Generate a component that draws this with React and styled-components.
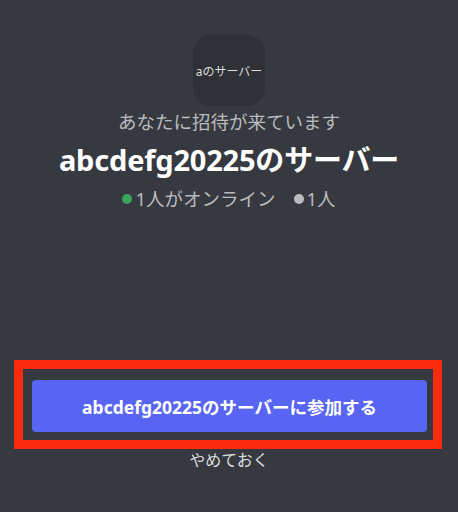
import React from 'react';
import styled, { createGlobalStyle } from 'styled-components';


//#region Styled Components
// 전역 스타일
const GlobalStyle = createGlobalStyle`
    html, body {
        margin: 0;
        padding: 0;
        background: #36393f;
    }
    body {
        font-family: "Noto Sans", "Noto Sans CJK JP", sans-serif;
        -webkit-font-smoothing: antialiased;
    }
`;

// 초대 화면
const InviteScreen = styled.div`
    width: 458px;
    height: 512px;
    box-sizing: border-box;
    padding-top: 35px;
    display: flex;
    flex-direction: column;
    align-items: center;
    background: #36393f;
    overflow: hidden;
`;

// 서버 아이콘
const ServerIcon = styled.div`
    width: 72px;
    height: 71px;
    border-radius: 18px;
    background: #2f3136;
    display: flex;
    align-items: center;
    justify-content: center;
    color: #dcddde;
    font-size: 12px;
    white-space: nowrap;
`;

// 초대 문구
const InviteLabel = styled.div`
    margin-top: 3px;
    color: #b9bbbe;
    font-size: 18.5px;
    line-height: 26px;
`;

// 서버 이름
const ServerName = styled.h1`
    margin: 7px 0 0;
    color: #ffffff;
    font-size: 29px;
    font-weight: 700;
    line-height: 36px;
    letter-spacing: -0.2px;
`;

// 멤버 수 영역
const MemberStats = styled.div`
    margin-top: 9px;
    display: flex;
    align-items: center;
    gap: 18px;
    color: #b9bbbe;
    font-size: 18.5px;
    line-height: 24px;
`;

const Stat = styled.span`
    display: flex;
    align-items: center;
    gap: 3px;
`;

const Dot = styled.i`
    width: 10px;
    height: 10px;
    border-radius: 50%;
    background: ${({ $online }) => ($online ? '#3ba55d' : '#b9bbbe')};
`;

const Spacer = styled.div`
    flex: 1;
`;

// 강조 표시 프레임
const Highlight = styled.div`
    align-self: stretch;
    margin: 0 16px 0 14px;
    border: 9px solid #fa2a0c;
    padding: 11px 6px 8px 9px;
    background: #36393f;
`;

// 참가 버튼
const JoinButton = styled.button`
    width: 100%;
    height: 52px;
    border: none;
    border-radius: 4px;
    background: #5865f2;
    color: #ffffff;
    font-family: inherit;
    font-size: 17.5px;
    font-weight: 700;
    cursor: pointer;
`;

// 취소 링크
const CancelLink = styled.button`
    margin: 1px 0 42px;
    border: none;
    background: none;
    padding: 0;
    color: #dcddde;
    font-family: inherit;
    font-size: 16px;
    line-height: 20px;
    cursor: pointer;
`;
//#endregion Styled Components


const App = () => {
    const serverName = 'abcdefg20225のサーバー';

    return (
        <>
            <GlobalStyle />
            <InviteScreen>
                <ServerIcon>aのサーバー</ServerIcon>
                <InviteLabel>あなたに招待が来ています</InviteLabel>
                <ServerName>{serverName}</ServerName>
                <MemberStats>
                    <Stat>
                        <Dot $online />
                        1人がオンライン
                    </Stat>
                    <Stat>
                        <Dot />
                        1人
                    </Stat>
                </MemberStats>

                <Spacer />

                <Highlight>
                    <JoinButton>{serverName}に参加する</JoinButton>
                </Highlight>
                <CancelLink>やめておく</CancelLink>
            </InviteScreen>
        </>
    );
};

export default App;
